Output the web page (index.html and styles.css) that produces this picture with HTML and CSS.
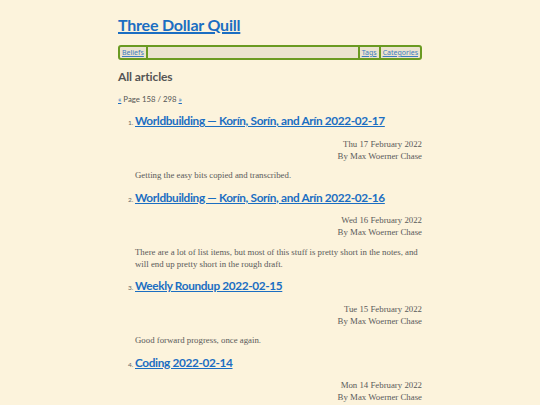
FILE: index.html
```html
<!DOCTYPE html>
<html>
<head>
<meta charset="utf-8">
<link rel="stylesheet" href="styles.css">
</head>
<body>
<div class="page">
  <h1 class="site-title"><a href="#">Three Dollar Quill</a></h1>
  <nav class="nav">
    <a class="nav-item nav-left" href="#">Beliefs</a>
    <span class="nav-spacer"></span>
    <a class="nav-item nav-right" href="#">Tags</a>
    <a class="nav-item nav-right" href="#">Categories</a>
  </nav>
  <h2 class="section-title">All articles</h2>
  <p class="pager"><a href="#">«</a> Page 158 / 298 <a href="#">»</a></p>
  <ol class="articles" start="1">
    <li class="article">
      <h3 class="article-title"><a href="#">Worldbuilding — Korín, Sorín, and Arín 2022-02-17</a></h3>
      <div class="meta"><div>Thu 17 February 2022</div><div>By Max Woerner Chase</div></div>
      <p class="summary">Getting the easy bits copied and transcribed.</p>
    </li>
    <li class="article">
      <h3 class="article-title"><a href="#">Worldbuilding — Korín, Sorín, and Arín 2022-02-16</a></h3>
      <div class="meta"><div>Wed 16 February 2022</div><div>By Max Woerner Chase</div></div>
      <p class="summary">There are a lot of list items, but most of this stuff is pretty short in the notes, and will end up pretty short in the rough draft.</p>
    </li>
    <li class="article">
      <h3 class="article-title"><a href="#">Weekly Roundup 2022-02-15</a></h3>
      <div class="meta"><div>Tue 15 February 2022</div><div>By Max Woerner Chase</div></div>
      <p class="summary">Good forward progress, once again.</p>
    </li>
    <li class="article">
      <h3 class="article-title"><a href="#">Coding 2022-02-14</a></h3>
      <div class="meta"><div>Mon 14 February 2022</div><div>By Max Woerner Chase</div></div>
      <p class="summary">More work on the code.</p>
    </li>
  </ol>
</div>
</body>
</html>
```
FILE: styles.css
```css
html, body {
  margin: 0;
  padding: 0;
  background: #fcf3dc;
}
body {
  font-family: "Liberation Serif", serif;
  font-size: 8.8px;
  line-height: 12px;
  color: #5a5a5a;
}
.page {
  width: 304px;
  margin: 0 auto;
  padding-top: 15px;
}
a {
  color: #1b6ec2;
}
.site-title {
  margin: 0;
  font-family: Lato, sans-serif;
  font-size: 16px;
  line-height: 20px;
  font-weight: 700;
  letter-spacing: -0.2px;
}
.site-title a {
  text-decoration-thickness: 1.5px;
}
.nav {
  margin-top: 10px;
  display: flex;
  align-items: stretch;
  height: 11px;
  border: 2px solid #6a9a22;
  border-radius: 3px;
  background: #ebe3cf;
  font-family: "Noto Sans", sans-serif;
  font-size: 7px;
  line-height: 11px;
}
.nav-item {
  color: #3c7cc0;
  padding: 0 2px;
}
.nav-left {
  border-right: 2px solid #6a9a22;
}
.nav-right {
  border-left: 2px solid #6a9a22;
}
.nav-spacer {
  flex: 1;
}
.section-title {
  margin: 9px 0 0;
  font-family: Lato, sans-serif;
  font-size: 12px;
  line-height: 15px;
  font-weight: 700;
  letter-spacing: -0.1px;
  color: #555;
}
.pager {
  margin: 9px 0 0;
  font-family: Lato, sans-serif;
  font-size: 7.8px;
  line-height: 12px;
  color: #555;
}
.articles {
  margin: 8px 0 0;
  padding-left: 17px;
}
.article::marker {
  font-family: Lato, sans-serif;
  font-size: 6.5px;
  color: #666;
}
.article-title {
  margin: 0;
  font-family: Lato, sans-serif;
  font-size: 11.8px;
  line-height: 16px;
  font-weight: 700;
  letter-spacing: -0.35px;
}
.article-title a {
  text-decoration-thickness: 1.2px;
}
.meta {
  margin-top: 8.5px;
  text-align: right;
}
.summary {
  margin: 7.5px 0 8.5px;
}
```
